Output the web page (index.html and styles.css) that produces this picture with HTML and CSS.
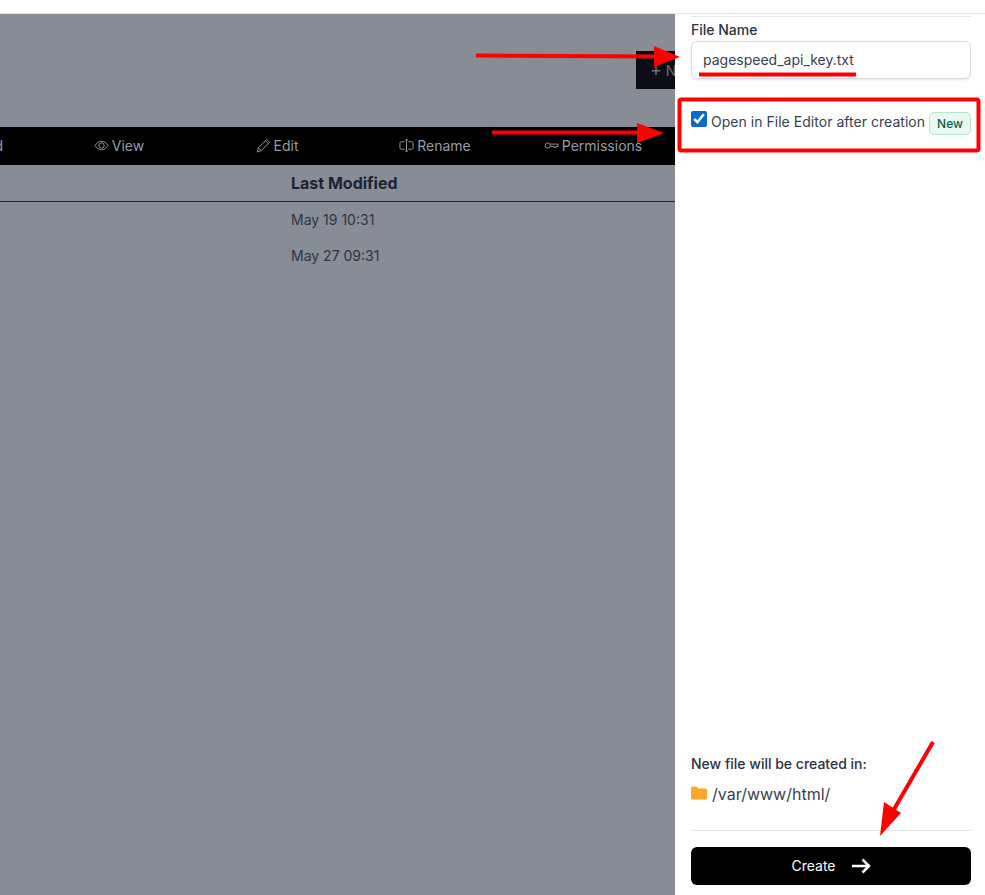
FILE: index.html
```html
<!DOCTYPE html>
<html lang="en">
<head>
    <meta charset="UTF-8">
    <meta name="viewport" content="width=device-width, initial-scale=1.0">
    <title>New File</title>
    <link rel="stylesheet" href="styles.css">
</head>
<body>
    <div class="topbar"></div>
    <div class="main">
        <div class="backdrop">
            <div class="new-row">
                <div class="new-btn"><span class="plus">+</span> New</div>
            </div>
            <div class="toolbar">
                <div class="tool tool-cut">Download</div>
                <div class="tool">
                    <svg class="tool-icon" viewBox="0 0 16 16"><path d="M1 8c2-3 4.300-4.500 7-4.500S13 5 15 8c-2 3-4.300 4.500-7 4.500S3 11 1 8z"/><circle cx="8" cy="8" r="2.800"/></svg>
                    View
                </div>
                <div class="tool">
                    <svg class="tool-icon" viewBox="0 0 16 16"><path d="M11.500 1.500l3 3L5.500 13.500 1.500 15l1-4.500z"/><path d="M10 3l3 3"/><path d="M2.500 10.500l3 3"/></svg>
                    Edit
                </div>
                <div class="tool">
                    <svg class="tool-icon" viewBox="0 0 16 16"><path d="M6 4H2.500A1.500 1.500 0 0 0 1 5.500v5A1.500 1.500 0 0 0 2.500 12H6"/><path d="M10 4h3.500A1.500 1.500 0 0 1 15 5.500v5a1.500 1.500 0 0 1-1.500 1.500H10"/><path d="M8 2v12M6.500 2h3M6.500 14h3"/></svg>
                    Rename
                </div>
                <div class="tool">
                    <svg class="tool-icon" viewBox="0 0 16 16"><circle cx="4" cy="8" r="2.800"/><path d="M6.800 6.500H15v2.500h-2V10h-2V9H6.800"/></svg>
                    Permissions
                </div>
            </div>
            <div class="table-head">Last Modified</div>
            <div class="table-row">May 19 10:31</div>
            <div class="table-row">May 27 09:31</div>
        </div>

        <div class="drawer">
            <div class="drawer-top">
                <label class="field-label">File Name</label>
                <div class="text-input">pagespeed_api_key.txt</div>
                <div class="check-row">
                    <input type="checkbox" class="check" checked>
                    <span class="check-text">Open in File Editor after creation</span>
                    <span class="badge">New</span>
                </div>
            </div>
            <div class="drawer-bottom">
                <div class="target-label">New file will be created in:</div>
                <div class="target-path">
                    <svg class="folder" viewBox="0 0 16 14"><path d="M0 2a1.500 1.500 0 0 1 1.500-1.500h4L7.500 2.500h7A1.500 1.500 0 0 1 16 4v8a1.500 1.500 0 0 1-1.500 1.500h-13A1.500 1.500 0 0 1 0 12z"/></svg>
                    /var/www/html/
                </div>
                <div class="create-wrap">
                    <div class="create-btn">
                        <span class="create-text">Create</span>
                        <svg class="create-arrow" viewBox="0 0 20 16"><path d="M1 8h17M11.500 1.500L18 8l-6.500 6.500"/></svg>
                    </div>
                </div>
            </div>
        </div>
    </div>

    <!-- red annotations drawn over the screenshot -->
    <svg class="notes" viewBox="0 0 985 895">
        <path class="note-line" d="M476 55.500L656 56.500"/>
        <path class="note-head" d="M654 46L680 57L654 67z"/>
        <path class="note-line" d="M492 132.500L640 132.500"/>
        <path class="note-head" d="M637 123L664 133L637 143z"/>
        <rect class="note-box" x="679.500" y="99.500" width="299" height="51" rx="2"/>
        <path class="note-line" d="M699 74.500H856"/>
        <path class="note-line" d="M933 742L893 811"/>
        <path class="note-head" d="M884 802L901 813L880 836z"/>
    </svg>
</body>
</html>
```

FILE: styles.css
```css
body {
    font-family: Inter, "Liberation Sans", sans-serif;
    margin: 0;
    padding: 0;
    width: 985px;
    height: 895px;
    overflow: hidden;
    position: relative;
    background: #fff;
    color: #1f2937;
    font-size: 14px;
}
.topbar {
    height: 13px;
    background: #fff;
    border-bottom: 1px solid #e2e4e9;
}
.main {
    display: flex;
    height: 881px;
}
.backdrop {
    width: 675px;
    flex-shrink: 0;
    background: #888c94;
    overflow: hidden;
}
.new-row {
    display: flex;
    justify-content: flex-end;
    padding-top: 37px;
}
.new-btn {
    width: 39px;
    height: 38px;
    box-sizing: border-box;
    padding-left: 14px;
    background: #0a0e14;
    color: #6b6f76;
    white-space: nowrap;
    overflow: hidden;
    line-height: 38px;
}
.plus {
    font-size: 18px;
}
.toolbar {
    display: grid;
    grid-template-columns: 40px repeat(4, 158px);
    margin-top: 38px;
    height: 38px;
    box-sizing: border-box;
    padding-bottom: 2px;
    background: #000;
    color: #989ca4;
}
.tool {
    display: flex;
    align-items: center;
    justify-content: center;
    gap: 3px;
    white-space: nowrap;
}
.tool-cut {
    justify-content: flex-end;
    padding-right: 37px;
    overflow: hidden;
}
.tool-icon {
    width: 15px;
    height: 15px;
    fill: none;
    stroke: #989ca4;
    stroke-width: 1;
}
.table-head {
    height: 36px;
    line-height: 36px;
    padding-left: 291px;
    border-bottom: 1px solid #1c2433;
    font-size: 16px;
    font-weight: 700;
    color: #1c2433;
}
.table-row {
    height: 36px;
    line-height: 36px;
    padding-left: 291px;
    color: #2f3644;
}
.drawer {
    flex: 1;
    display: flex;
    flex-direction: column;
    justify-content: space-between;
    padding: 0 14px 10px 16px;
    background: #fff;
}
.drawer-top {
    margin-top: 2px;
    padding-top: 4px;
    border-top: 1px solid #e5e7eb;
}
.field-label {
    display: block;
    line-height: 18px;
    font-weight: 500;
    color: #2b3342;
}
.text-input {
    margin-top: 2px;
    height: 38px;
    line-height: 36px;
    box-sizing: border-box;
    padding-left: 11px;
    border: 1px solid #d9dce3;
    border-radius: 6px;
    box-shadow: 0 1px 2px rgba(0, 0, 0, 0.1);
    color: #374151;
}
.check-row {
    display: flex;
    align-items: flex-start;
    margin-top: 32px;
}
.check {
    width: 16px;
    height: 16px;
    margin: 0 4px 0 0;
    accent-color: #0b6bcb;
}
.check-text {
    line-height: 22px;
    color: #374151;
    white-space: nowrap;
    letter-spacing: 0.03px;
}
.badge {
    margin-left: auto;
    width: 42px;
    height: 23px;
    margin-top: 1px;
    box-sizing: border-box;
    border: 1px solid #b5e5cf;
    border-radius: 5px;
    background: #e9f9f1;
    color: #065f46;
    font-size: 12px;
    font-weight: 500;
    line-height: 21px;
    text-align: center;
}
.target-label {
    line-height: 18px;
    font-weight: 500;
    color: #2b3342;
}
.target-path {
    display: flex;
    align-items: center;
    gap: 5px;
    margin-top: 11px;
    margin-bottom: 26px;
    font-size: 16px;
    line-height: 20px;
    color: #374151;
}
.folder {
    width: 16px;
    height: 14px;
    margin-top: -3px;
    fill: #ffa62b;
}
.create-wrap {
    padding-top: 16px;
    border-top: 1px solid #e5e7eb;
}
.create-btn {
    display: flex;
    align-items: center;
    justify-content: center;
    gap: 15px;
    height: 38px;
    border-radius: 6px;
    background: #000;
    color: #fff;
}
.create-text {
    padding-bottom: 2px;
}
.create-arrow {
    width: 20px;
    height: 16px;
    margin-bottom: 1px;
    fill: none;
    stroke: #fff;
    stroke-width: 2.500;
}
.notes {
    position: absolute;
    left: 0;
    top: 0;
    width: 985px;
    height: 895px;
    pointer-events: none;
}
.note-line {
    fill: none;
    stroke: #ff0000;
    stroke-width: 4;
}
.note-head {
    fill: #ff0000;
}
.note-box {
    fill: none;
    stroke: #ff0000;
    stroke-width: 4;
}
```
